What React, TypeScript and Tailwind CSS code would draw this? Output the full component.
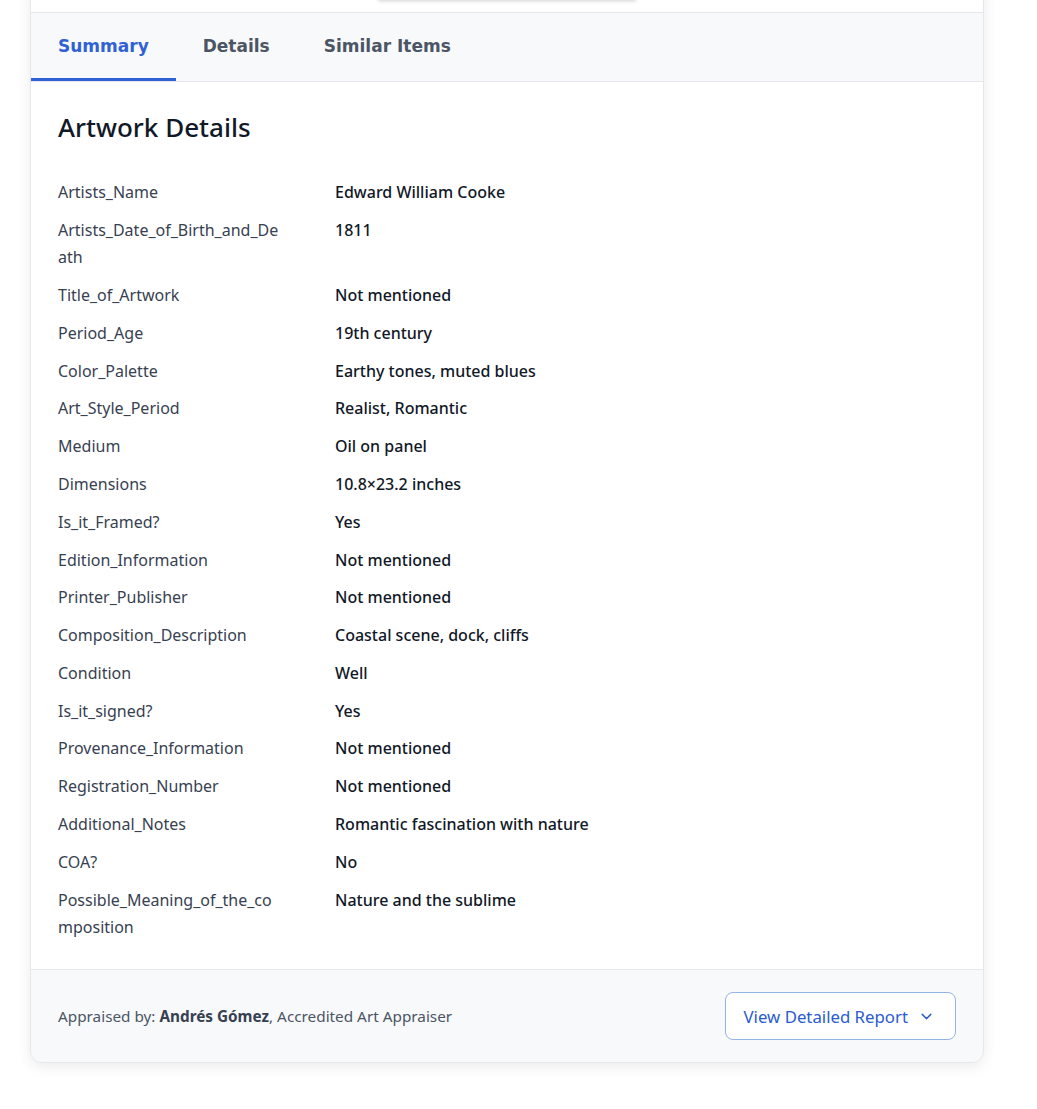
import { ChevronDown } from "lucide-react";

const rows: [string, string][] = [
  ["Artists_Name", "Edward William Cooke"],
  ["Artists_Date_of_Birth_and_Death", "1811"],
  ["Title_of_Artwork", "Not mentioned"],
  ["Period_Age", "19th century"],
  ["Color_Palette", "Earthy tones, muted blues"],
  ["Art_Style_Period", "Realist, Romantic"],
  ["Medium", "Oil on panel"],
  ["Dimensions", "10.8×23.2 inches"],
  ["Is_it_Framed?", "Yes"],
  ["Edition_Information", "Not mentioned"],
  ["Printer_Publisher", "Not mentioned"],
  ["Composition_Description", "Coastal scene, dock, cliffs"],
  ["Condition", "Well"],
  ["Is_it_signed?", "Yes"],
  ["Provenance_Information", "Not mentioned"],
  ["Registration_Number", "Not mentioned"],
  ["Additional_Notes", "Romantic fascination with nature"],
  ["COA?", "No"],
  ["Possible_Meaning_of_the_composition", "Nature and the sublime"],
];

const tabs = ["Summary", "Details", "Similar Items"];

export default function App() {
  return (
    <div className="min-h-screen bg-white overflow-hidden font-['Noto_Sans',sans-serif]">
      <div className="ml-[30px] w-[954px] -mt-[201px] rounded-xl border border-[#e5e7eb] bg-white shadow-[0_4px_14px_rgba(0,0,0,0.08)]">
        {/* image area, scrolled out of view */}
        <div className="h-[212px] pb-[12px]">
          <div className="mx-auto h-[200px] w-[258px] bg-white shadow-[0_1px_4px_rgba(0,0,0,0.18)]" />
        </div>

        <div className="flex border-y border-[#e5e7eb] bg-[#f8f9fb] font-['DejaVu_Sans',sans-serif]">
          {tabs.map((t, i) => (
            <div
              key={t}
              className={
                i === 0
                  ? "px-[27px] pt-[21px] pb-[20px] border-b-[3px] border-[#3061d5] text-[17px] leading-6 font-bold text-[#3061d5]"
                  : "px-[27px] pt-[21px] pb-[20px] border-b-[3px] border-transparent text-[17px] leading-6 font-bold text-[#4b5563]"
              }
            >
              {t}
            </div>
          ))}
        </div>

        <div className="px-[27px] pt-[29px] pb-[23px]">
          <h2 className="text-[26px] leading-8 font-medium text-[#111827] mb-[31px]">Artwork Details</h2>
          <div className="grid grid-cols-[277px_1fr]">
            {rows.map(([k, v]) => (
              <div key={k} className="contents">
                <div className="py-[5.3px] pr-[50px] text-[16px] leading-[1.7] text-[#374151] break-all">{k}</div>
                <div className="py-[5.3px] text-[16px] leading-[1.7] font-medium text-[#111827]">{v}</div>
              </div>
            ))}
          </div>
        </div>

        <div className="flex items-center justify-between rounded-b-xl border-t border-[#e5e7eb] bg-[#f8f9fb] px-[27px] py-[22px]">
          <p className="text-[15.3px] text-[#4b5563]">
            Appraised by: <span className="font-bold text-[#374151]">Andrés Gómez</span>, Accredited Art Appraiser
          </p>
          <button className="flex h-[48px] items-center gap-[10px] rounded-lg border border-[#93b4e6] bg-white pl-[18px] pr-[20px] text-[16.8px] text-[#2b5bd0]">
            View Detailed Report
            <ChevronDown className="h-[17px] w-[17px]" strokeWidth={2} />
          </button>
        </div>
      </div>
    </div>
  );
}
